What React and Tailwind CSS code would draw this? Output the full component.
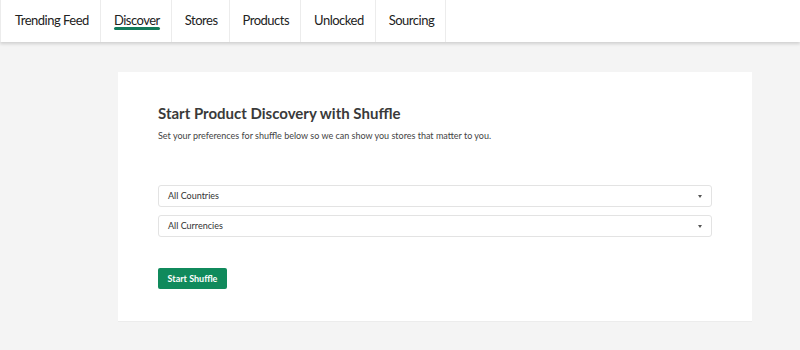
export default function App() {
  const tabs = ["Trending Feed", "Discover", "Stores", "Products", "Unlocked", "Sourcing"];
  return (
    <div className="w-[800px] h-[350px] bg-[#f4f4f4] overflow-hidden" style={{ fontFamily: "Lato, 'Open Sans', sans-serif" }}>
      <div className="h-[42px] bg-white flex shadow-[0_2px_3px_rgba(0,0,0,0.15)] relative z-10">
        {tabs.map((t, i) => (
          <div key={t} className={`h-full flex items-center pr-[11px] border-r border-[#ececec] text-[13px] tracking-[-0.5px] text-[#222] ${i === 0 ? "pl-[14px] border-l" : "pl-[13px]"}`}>
            <span className="relative">
              {t}
              {i === 1 && <span className="absolute left-0 right-0 top-[16px] h-[3px] bg-[#137a5a] rounded-sm" />}
            </span>
          </div>
        ))}
      </div>
      <div className="pt-[30px] pl-[118px]">
        <div className="w-[634px] h-[250px] bg-white border-b border-[#ececec] px-10 pt-[33px]">
          <h1 className="text-[15px] font-bold text-[#3a3a3a] leading-[16px]">Start Product Discovery with Shuffle</h1>
          <p className="text-[9px] text-[#444] mt-[9px] leading-[12px]">Set your preferences for shuffle below so we can show you stores that matter to you.</p>
          <div className="mt-[43px] flex flex-col gap-[8px]">
            {["All Countries", "All Currencies"].map((s) => (
              <div key={s} className="h-[22px] border border-[#e3e3e3] rounded-[3px] flex items-center justify-between pl-[9px] pr-[9px] text-[9px] text-[#333]">
                <span>{s}</span>
                <span className="w-0 h-0 border-l-[2.5px] border-r-[2.5px] border-t-[3px] border-l-transparent border-r-transparent border-t-[#555]" />
              </div>
            ))}
          </div>
          <button className="mt-[31px] h-[21px] w-[69px] bg-[#108a5c] rounded-[2px] text-white text-[9px] font-bold flex items-center justify-center">Start Shuffle</button>
        </div>
      </div>
    </div>
  );
}
